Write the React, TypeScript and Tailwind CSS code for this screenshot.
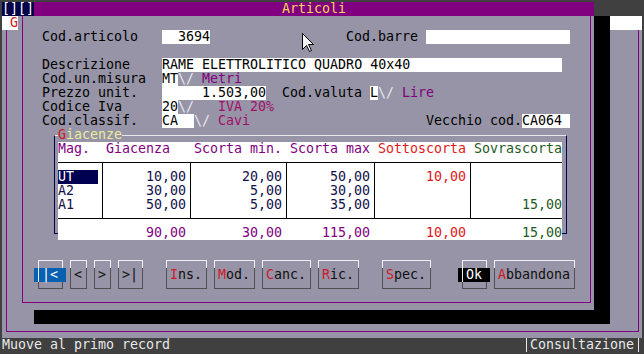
import React from "react";

function Btn({ children }: { children: React.ReactNode }) {
  return <>{children}</>;
}

export default function App() {
  return (
    <div className="relative w-[644px] h-[354px] bg-[#404040] pl-[2px] pt-[2px] overflow-hidden font-['DejaVu_Sans_Mono',monospace] text-[13.3px] leading-[14px] text-black">
      <div className="grid grid-cols-[repeat(80,8px)] grid-rows-[repeat(25,14px)] w-[640px] h-[350px] bg-[#9694a6] whitespace-pre">
        {/* top row */}
        <div className="col-start-1 col-span-4 row-start-1 bg-[#000048] text-white">[][]</div>
        <div className="col-start-5 col-span-70 row-start-1 bg-[#800080]" />
        <div className="col-start-36 col-span-8 row-start-1 text-[#f5d65a]">Articoli</div>
        <div className="col-start-75 col-span-6 row-start-1 bg-[#404040]" />

        {/* outer window */}
        <div className="col-start-1 col-span-2 row-start-2 bg-white text-[#d01818]"> G</div>
        <div className="col-start-77 col-span-4 row-start-2 bg-white" />
        <div className="col-start-1 col-span-80 row-start-3 row-span-22 ml-[4px] mr-[3px] mb-[6px] border-l border-r border-b border-[#800080]" />

        {/* dialog frame and shadow */}
        <div className="col-start-3 col-span-72 row-start-2 row-span-21 ml-[4px] mr-[3px] mb-[7px] border-l border-r border-b border-[#800080]" />
        <div className="col-start-75 col-span-2 row-start-2 row-span-22 bg-black" />
        <div className="col-start-5 col-span-72 row-start-23 bg-black" />

        {/* fields */}
        <div className="col-start-6 col-span-12 row-start-3">Cod.articolo</div>
        <div className="col-start-21 col-span-6 row-start-3 bg-white text-right">3694</div>
        <div className="col-start-44 col-span-9 row-start-3">Cod.barre</div>
        <div className="col-start-54 col-span-18 row-start-3 bg-white" />

        <div className="col-start-6 col-span-11 row-start-5">Descrizione</div>
        <div className="col-start-21 col-span-50 row-start-5 bg-white">RAME ELETTROLITICO QUADRO 40x40</div>

        <div className="col-start-6 col-span-13 row-start-6">Cod.un.misura</div>
        <div className="col-start-21 col-span-2 row-start-6 bg-white">MT</div>
        <div className="col-start-23 col-span-2 row-start-6 text-[#e8e8f0]">\/</div>
        <div className="col-start-26 col-span-5 row-start-6 text-[#800080]">Metri</div>

        <div className="col-start-6 col-span-12 row-start-7">Prezzo unit.</div>
        <div className="col-start-21 col-span-13 row-start-7 bg-white text-right">1.503,00</div>
        <div className="col-start-36 col-span-10 row-start-7">Cod.valuta</div>
        <div className="col-start-47 col-span-1 row-start-7 bg-white">L</div>
        <div className="col-start-48 col-span-2 row-start-7 text-[#e8e8f0]">\/</div>
        <div className="col-start-51 col-span-4 row-start-7 text-[#800080]">Lire</div>

        <div className="col-start-6 col-span-10 row-start-8">Codice Iva</div>
        <div className="col-start-21 col-span-2 row-start-8 bg-white">20</div>
        <div className="col-start-23 col-span-2 row-start-8 text-[#e8e8f0]">\/</div>
        <div className="col-start-28 col-span-7 row-start-8 text-[#a0106a]">IVA 20%</div>

        <div className="col-start-6 col-span-12 row-start-9">Cod.classif.</div>
        <div className="col-start-21 col-span-4 row-start-9 bg-white">CA</div>
        <div className="col-start-25 col-span-2 row-start-9 text-[#e8e8f0]">\/</div>
        <div className="col-start-28 col-span-4 row-start-9 text-[#a0106a]">Cavi</div>
        <div className="col-start-54 col-span-12 row-start-9">Vecchio cod.</div>
        <div className="col-start-66 col-span-6 row-start-9 bg-white">CA064</div>

        {/* Giacenze group */}
        <div className="col-start-7 col-span-65 row-start-10 row-span-8 ml-[4px] mr-[3px] mt-[7px] mb-[6px] border border-[#000048] border-t-[#e8e8e8]" />
        <div className="col-start-8 col-span-8 row-start-10 bg-[#9694a6]">
          <span className="text-[#d01818]">G</span>
          <span className="text-[#ecec9a]">iacenze</span>
        </div>
        <div className="col-start-8 col-span-63 row-start-11 row-span-7 bg-white" />
        <div className="col-start-8 col-span-4 row-start-11 text-[#800080]">Mag.</div>
        <div className="col-start-14 col-span-8 row-start-11 text-[#800080]">Giacenza</div>
        <div className="col-start-25 col-span-11 row-start-11 text-[#800080]">Scorta min.</div>
        <div className="col-start-37 col-span-10 row-start-11 text-[#800080]">Scorta max</div>
        <div className="col-start-48 col-span-11 row-start-11 text-[#e01818]">Sottoscorta</div>
        <div className="col-start-60 col-span-11 row-start-11 text-[#1e5a1e]">Sovrascorta</div>

        <div className="col-start-8 col-span-63 row-start-12 mt-[6px] h-[1px] bg-black" />
        <div className="col-start-8 col-span-63 row-start-16 mt-[6px] h-[1px] bg-black" />
        <div className="col-start-13 row-start-12 row-span-5 ml-[4px] mt-[6px] mb-[7px] w-[1px] bg-black" />
        <div className="col-start-24 row-start-12 row-span-5 ml-[4px] mt-[6px] mb-[7px] w-[1px] bg-black" />
        <div className="col-start-36 row-start-12 row-span-5 ml-[4px] mt-[6px] mb-[7px] w-[1px] bg-black" />
        <div className="col-start-47 row-start-12 row-span-5 ml-[4px] mt-[6px] mb-[7px] w-[1px] bg-black" />
        <div className="col-start-59 row-start-12 row-span-5 ml-[4px] mt-[6px] mb-[7px] w-[1px] bg-black" />

        <div className="col-start-8 col-span-5 row-start-13 bg-[#000050] text-white">UT</div>
        <div className="col-start-8 col-span-5 row-start-14 text-[#10104a]">A2</div>
        <div className="col-start-8 col-span-5 row-start-15 text-[#10104a]">A1</div>

        <div className="col-start-14 col-span-10 row-start-13 row-span-3 text-right text-[#10104a] flex flex-col">
          <span>10,00</span><span>30,00</span><span>50,00</span>
        </div>
        <div className="col-start-25 col-span-11 row-start-13 row-span-3 text-right text-[#10104a] flex flex-col">
          <span>20,00</span><span>5,00</span><span>5,00</span>
        </div>
        <div className="col-start-37 col-span-10 row-start-13 row-span-3 text-right text-[#10104a] flex flex-col">
          <span>50,00</span><span>30,00</span><span>35,00</span>
        </div>
        <div className="col-start-48 col-span-11 row-start-13 text-right text-[#e01818]">10,00</div>
        <div className="col-start-60 col-span-11 row-start-15 text-right text-[#1e5a1e]">15,00</div>

        <div className="col-start-14 col-span-10 row-start-17 text-right text-[#800080]">90,00</div>
        <div className="col-start-25 col-span-11 row-start-17 text-right text-[#800080]">30,00</div>
        <div className="col-start-37 col-span-10 row-start-17 text-right text-[#800080]">115,00</div>
        <div className="col-start-48 col-span-11 row-start-17 text-right text-[#e01818]">10,00</div>
        <div className="col-start-60 col-span-11 row-start-17 text-right text-[#1e5a1e]">15,00</div>

        {/* buttons: frames (top part white, lower dark) */}
        <Btn>
          <div className="col-start-5 col-span-4 row-start-19 ml-[4px] mr-[3px] mt-[6px] border-t border-l border-r border-[#f0f0f0]" />
          <div className="col-start-5 col-span-4 row-start-20 row-span-2 ml-[4px] mr-[3px] mb-[7px] border-l border-r border-b border-[#505050]" />
          <div className="col-start-9 col-span-3 row-start-19 ml-[4px] mr-[3px] mt-[6px] border-t border-l border-r border-[#f0f0f0]" />
          <div className="col-start-9 col-span-3 row-start-20 row-span-2 ml-[4px] mr-[3px] mb-[7px] border-l border-r border-b border-[#505050]" />
          <div className="col-start-12 col-span-3 row-start-19 ml-[4px] mr-[3px] mt-[6px] border-t border-l border-r border-[#f0f0f0]" />
          <div className="col-start-12 col-span-3 row-start-20 row-span-2 ml-[4px] mr-[3px] mb-[7px] border-l border-r border-b border-[#505050]" />
          <div className="col-start-15 col-span-4 row-start-19 ml-[4px] mr-[3px] mt-[6px] border-t border-l border-r border-[#f0f0f0]" />
          <div className="col-start-15 col-span-4 row-start-20 row-span-2 ml-[4px] mr-[3px] mb-[7px] border-l border-r border-b border-[#505050]" />
          <div className="col-start-21 col-span-6 row-start-19 ml-[4px] mr-[3px] mt-[6px] border-t border-l border-r border-[#f0f0f0]" />
          <div className="col-start-21 col-span-6 row-start-20 row-span-2 ml-[4px] mr-[3px] mb-[7px] border-l border-r border-b border-[#505050]" />
          <div className="col-start-27 col-span-6 row-start-19 ml-[4px] mr-[3px] mt-[6px] border-t border-l border-r border-[#f0f0f0]" />
          <div className="col-start-27 col-span-6 row-start-20 row-span-2 ml-[4px] mr-[3px] mb-[7px] border-l border-r border-b border-[#505050]" />
          <div className="col-start-33 col-span-7 row-start-19 ml-[4px] mr-[3px] mt-[6px] border-t border-l border-r border-[#f0f0f0]" />
          <div className="col-start-33 col-span-7 row-start-20 row-span-2 ml-[4px] mr-[3px] mb-[7px] border-l border-r border-b border-[#505050]" />
          <div className="col-start-40 col-span-6 row-start-19 ml-[4px] mr-[3px] mt-[6px] border-t border-l border-r border-[#f0f0f0]" />
          <div className="col-start-40 col-span-6 row-start-20 row-span-2 ml-[4px] mr-[3px] mb-[7px] border-l border-r border-b border-[#505050]" />
          <div className="col-start-48 col-span-7 row-start-19 ml-[4px] mr-[3px] mt-[6px] border-t border-l border-r border-[#f0f0f0]" />
          <div className="col-start-48 col-span-7 row-start-20 row-span-2 ml-[4px] mr-[3px] mb-[7px] border-l border-r border-b border-[#505050]" />
          <div className="col-start-58 col-span-4 row-start-19 ml-[4px] mr-[3px] mt-[6px] border-t border-l border-r border-[#f0f0f0]" />
          <div className="col-start-58 col-span-4 row-start-20 row-span-2 ml-[4px] mr-[3px] mb-[7px] border-l border-r border-b border-[#505050]" />
          <div className="col-start-62 col-span-11 row-start-19 ml-[4px] mr-[3px] mt-[6px] border-t border-l border-r border-[#f0f0f0]" />
          <div className="col-start-62 col-span-11 row-start-20 row-span-2 ml-[4px] mr-[3px] mb-[7px] border-l border-r border-b border-[#505050]" />
        </Btn>

        {/* highlights */}
        <div className="col-start-5 col-span-4 row-start-20 bg-[#0a60b0] flex">
          <div className="ml-[4px] w-[1px] bg-[#f0f0f0]" />
        </div>
        <div className="col-start-58 col-span-4 row-start-20 bg-black flex">
          <div className="ml-[4px] w-[1px] bg-[#f0f0f0]" />
        </div>

        {/* button labels */}
        <div className="col-start-6 col-span-2 row-start-20 text-white">|&lt;</div>
        <div className="col-start-10 row-start-20 text-[#101010]">&lt;</div>
        <div className="col-start-13 row-start-20 text-[#101010]">&gt;</div>
        <div className="col-start-16 col-span-2 row-start-20 text-[#101010]">&gt;|</div>
        <div className="col-start-22 col-span-4 row-start-20 text-[#101010]"><span className="text-[#d01828]">I</span>ns.</div>
        <div className="col-start-28 col-span-4 row-start-20 text-[#101010]"><span className="text-[#d01828]">M</span>od.</div>
        <div className="col-start-34 col-span-5 row-start-20 text-[#101010]"><span className="text-[#d01828]">C</span>anc.</div>
        <div className="col-start-41 col-span-4 row-start-20 text-[#101010]"><span className="text-[#d01828]">R</span>ic.</div>
        <div className="col-start-49 col-span-5 row-start-20 text-[#101010]"><span className="text-[#d01828]">S</span>pec.</div>
        <div className="col-start-59 col-span-2 row-start-20 text-white">Ok</div>
        <div className="col-start-63 col-span-9 row-start-20 text-[#101010]"><span className="text-[#d01828]">A</span>bbandona</div>

        {/* status bar */}
        <div className="col-start-1 col-span-80 row-start-25 bg-[#404040] text-[#e8e8e8]">Muove al primo record</div>
        <div className="col-start-66 col-span-15 row-start-25 ml-[4px] mr-[3px] border-l border-r border-[#e8e8e8]" />
        <div className="col-start-67 col-span-13 row-start-25 text-[#e8e8e8]">Consultazione</div>
      </div>

      {/* mouse pointer */}
      <svg className="absolute left-[302px] top-[33px]" width="13" height="20" viewBox="0 0 13 20">
        <path d="M0.5 0.5 L0.5 16.5 L4.5 12.5 L7.5 18.5 L9.5 17.5 L6.5 11.5 L11.5 11.5 Z" fill="#f4f4f4" stroke="#000" strokeWidth="1" />
      </svg>
    </div>
  );
}
